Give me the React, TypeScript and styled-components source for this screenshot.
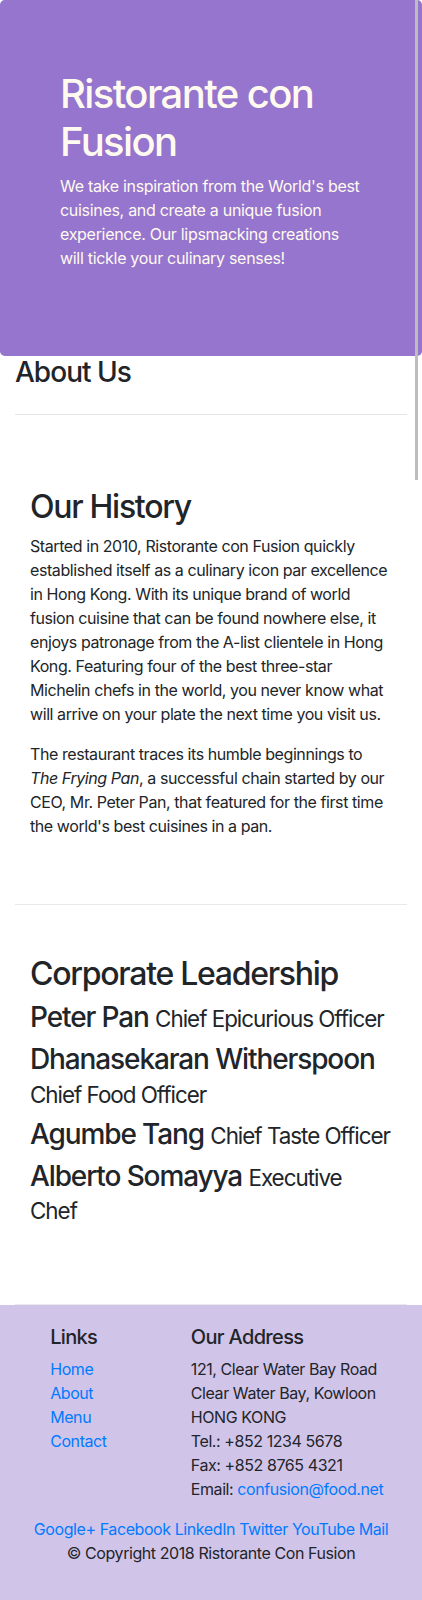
import React from "react";
import styled, { createGlobalStyle } from "styled-components";

const GlobalStyle = createGlobalStyle`
  html, body { margin: 0; padding: 0; }
  body {
    font-family: Inter, "Noto Sans", "Liberation Sans", sans-serif;
    font-size: 16px;
    line-height: 1.5;
    letter-spacing: -0.42px;
    color: #212529;
    background: #ffffff;
    position: relative;
  }
  * { box-sizing: border-box; }
`;

const Page = styled.div`
  position: relative;
  width: 100%;
`;

const ScrollThumb = styled.div`
  position: absolute;
  top: 0;
  left: 415px;
  width: 3px;
  height: 480px;
  background: #bdbdbd;
  z-index: 5;
`;

const Jumbotron = styled.header`
  background: #9575cd;
  color: floralwhite;
  padding: 70px 30px;
  border-radius: 4.8px;
`;

const Container = styled.div`
  padding: 0 15px;
`;

const HeaderRow = styled.div`
  margin: 0 auto;
`;

const Col = styled.div`
  padding: 0 15px;
`;

const Title = styled.h1`
  font-size: 40px;
  font-weight: 500;
  line-height: 1.2;
  letter-spacing: -0.04em;
  margin: 0 0 8px;
`;

const Lead = styled.p`
  margin: 0 0 16px;
  letter-spacing: -0.3px;
`;

const PageHeading = styled.h3`
  font-size: 28px;
  font-weight: 500;
  line-height: 1.2;
  letter-spacing: -0.035em;
  margin: 0 0 8px;
`;

const Rule = styled.hr`
  border: 0;
  border-top: 1px solid rgba(0, 0, 0, 0.1);
  margin: 24px 0 23px;
`;

const Section = styled.section`
  padding: 50px 0;
  min-height: 400px;
  border-bottom: 1px solid #e9e9e9;
`;

const SectionTitle = styled.h2`
  font-size: 32px;
  font-weight: 500;
  line-height: 1.2;
  letter-spacing: -0.04em;
  margin: 0 0 8px;
`;

const Para = styled.p`
  margin: 0 0 16px;
`;

const Leader = styled.h3`
  font-size: 28px;
  font-weight: 500;
  line-height: 1.2;
  letter-spacing: -0.04em;
  margin: 0 0 8px;
`;

const Role = styled.small`
  font-size: 80%;
  font-weight: 400;
  letter-spacing: -0.045em;
`;

const Footer = styled.footer`
  background: #d1c4e9;
  padding: 20px 0;
`;

const FooterRow = styled.div`
  display: flex;
`;

const LinksCol = styled.div`
  margin-left: 8.3333%;
  width: 33.3333%;
  padding: 0 15px;
`;

const AddressCol = styled.div`
  width: 58.3333%;
  padding: 0 15px;
`;

const FooterHeading = styled.h5`
  font-size: 20px;
  font-weight: 500;
  line-height: 1.2;
  letter-spacing: -0.033em;
  margin: 0 0 8px;
`;

const LinkList = styled.ul`
  list-style: none;
  padding: 0;
  margin: 0 0 16px;
`;

const Link = styled.a`
  color: #007bff;
  text-decoration: none;
`;

const Address = styled.address`
  font-style: normal;
  margin: 0 0 16px;
`;

const Centered = styled.div`
  text-align: center;
`;

const Copyright = styled.p`
  margin: 0 0 16px;
  text-align: center;
`;

const leaders = [
  { name: "Peter Pan", role: "Chief Epicurious Officer" },
  { name: "Dhanasekaran Witherspoon", role: "Chief Food Officer" },
  { name: "Agumbe Tang", role: "Chief Taste Officer" },
  { name: "Alberto Somayya", role: "Executive Chef" },
];

const socials = ["Google+", "Facebook", "LinkedIn", "Twitter", "YouTube", "Mail"];

export default function App() {
  return (
    <Page>
      <GlobalStyle />
      <ScrollThumb />
      <Jumbotron>
        <Container>
          <HeaderRow>
            <Col>
              <Title>Ristorante con Fusion</Title>
              <Lead>
                We take inspiration from the World's best cuisines, and create a
                unique fusion experience. Our lipsmacking creations will tickle
                your culinary senses!
              </Lead>
            </Col>
          </HeaderRow>
        </Container>
      </Jumbotron>
      <Container>
        <PageHeading>About Us</PageHeading>
        <Rule />
        <Section>
          <Col>
            <SectionTitle>Our History</SectionTitle>
            <Para>
              Started in 2010, Ristorante con Fusion quickly established itself
              as a culinary icon par excellence in Hong Kong. With its unique
              brand of world fusion cuisine that can be found nowhere else, it
              enjoys patronage from the A-list clientele in Hong Kong. Featuring
              four of the best three-star Michelin chefs in the world, you never
              know what will arrive on your plate the next time you visit us.
            </Para>
            <Para>
              The restaurant traces its humble beginnings to{" "}
              <em>The Frying Pan</em>, a successful chain started by our CEO, Mr.
              Peter Pan, that featured for the first time the world's best
              cuisines in a pan.
            </Para>
          </Col>
        </Section>
        <Section>
          <Col>
            <SectionTitle>Corporate Leadership</SectionTitle>
            {leaders.map((l) => (
              <Leader key={l.name}>
                {l.name} <Role>{l.role}</Role>
              </Leader>
            ))}
          </Col>
        </Section>
      </Container>
      <Footer>
        <FooterRow>
          <LinksCol>
            <FooterHeading>Links</FooterHeading>
            <LinkList>
              <li><Link href="#">Home</Link></li>
              <li><Link href="#">About</Link></li>
              <li><Link href="#">Menu</Link></li>
              <li><Link href="#">Contact</Link></li>
            </LinkList>
          </LinksCol>
          <AddressCol>
            <FooterHeading>Our Address</FooterHeading>
            <Address>
              121, Clear Water Bay Road<br />
              Clear Water Bay, Kowloon<br />
              HONG KONG<br />
              Tel.: +852 1234 5678<br />
              Fax: +852 8765 4321<br />
              Email: <Link href="#">confusion@food.net</Link>
            </Address>
          </AddressCol>
        </FooterRow>
        <Centered>
          {socials.map((s, i) => (
            <React.Fragment key={s}>
              <Link href="#">{s}</Link>
              {i < socials.length - 1 ? " " : ""}
            </React.Fragment>
          ))}
        </Centered>
        <Copyright>© Copyright 2018 Ristorante Con Fusion</Copyright>
      </Footer>
    </Page>
  );
}
